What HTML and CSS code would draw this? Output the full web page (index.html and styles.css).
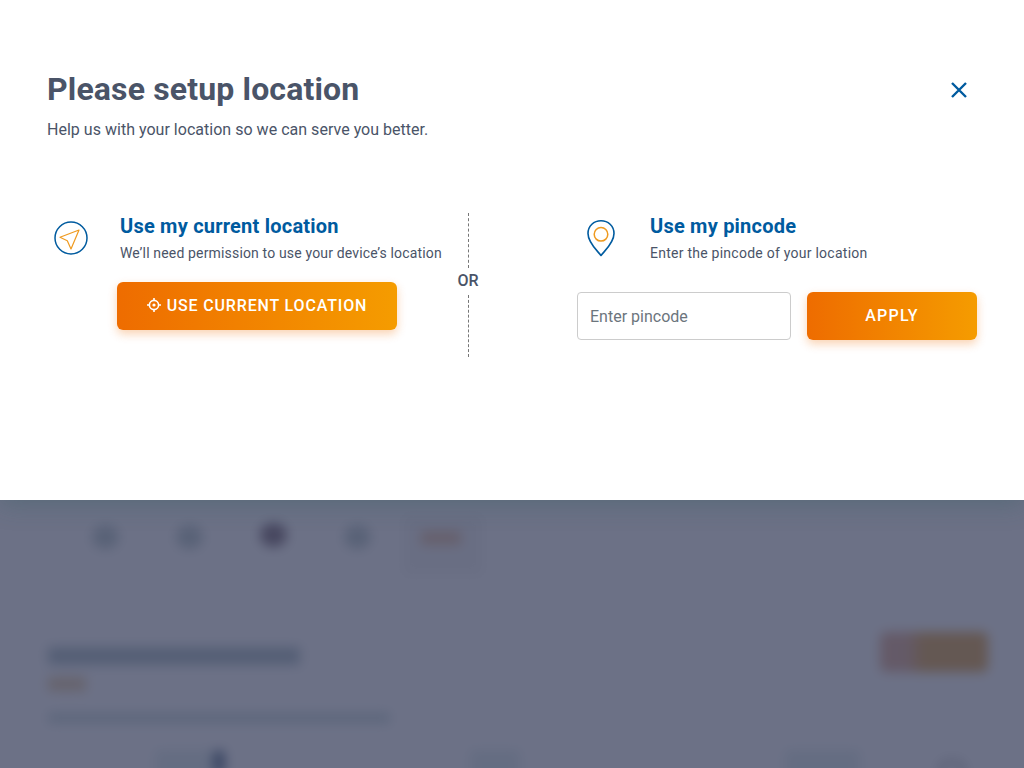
FILE: index.html
```html
<!DOCTYPE html>
<html lang="en">
<head>
    <meta charset="UTF-8">
    <meta name="viewport" content="width=device-width, initial-scale=1.0">
    <title>Please setup location</title>
    <link rel="stylesheet" href="styles.css">
</head>
<body>
    <!-- page behind the modal, blurred -->
    <div class="page">
        <div class="page-nav">
            <span class="nav-dot"></span>
            <span class="nav-dot"></span>
            <span class="nav-dot nav-dark"></span>
            <span class="nav-dot"></span>
            <div class="nav-tab"><span class="nav-label"></span></div>
        </div>
        <div class="page-head">
            <div>
                <div class="page-title"></div>
                <div class="page-tag"></div>
                <div class="page-text"></div>
            </div>
            <div class="page-btn"></div>
        </div>
        <div class="page-art">
            <span class="art-pale art-first"><span class="art-blue"></span></span>
            <span class="art-pale art-second"></span>
            <span class="art-pale art-third"></span>
            <span class="art-outline"></span>
        </div>
    </div>
    <div class="overlay"></div>

    <div class="modal">
        <div class="modal-head">
            <div>
                <h1>Please setup location</h1>
                <p class="subtitle">Help us with your location so we can serve you better.</p>
            </div>
            <button class="close" type="button" aria-label="Close">
                <svg width="18" height="18" viewBox="0 0 18 18" fill="none" stroke="#005b9f" stroke-width="2.4">
                    <path d="M2 2l14 14M16 2L2 16"/>
                </svg>
            </button>
        </div>

        <div class="options">
            <div class="option option-current">
                <div class="option-info">
                    <svg class="option-icon" width="36" height="36" viewBox="0 0 36 36" fill="none">
                        <circle cx="18" cy="18" r="16" stroke="#005b9f" stroke-width="1.5"/>
                        <path d="M7 17.300L26 10 18 29 14.300 20.700z" stroke="#ef9a1f" stroke-width="1.2" stroke-linejoin="round"/>
                    </svg>
                    <div>
                        <h3>Use my current location</h3>
                        <p>We’ll need permission to use your device’s location</p>
                    </div>
                </div>
                <button class="btn btn-location" type="button">
                    <svg width="14" height="14" viewBox="0 0 14 14" fill="none" stroke="#fff" stroke-width="1.6">
                        <circle cx="7" cy="7" r="4.6"/>
                        <circle cx="7" cy="7" r="1.6" fill="#fff" stroke="none"/>
                        <path d="M7 0v2.400M7 11.600V14M0 7h2.400M11.600 7H14"/>
                    </svg>
                    USE CURRENT LOCATION
                </button>
            </div>

            <div class="divider">
                <span class="divider-line line-top"></span>
                <span class="divider-text">OR</span>
                <span class="divider-line line-bottom"></span>
            </div>

            <div class="option option-pincode">
                <div class="option-info">
                    <svg class="option-icon" width="30" height="38" viewBox="0 0 30 38" fill="none">
                        <path d="M15 36.500C11.500 31.800 2 24 2 14.500C2 6.800 8 1.800 15 1.800C22 1.800 28 6.800 28 14.500C28 24 18.500 31.800 15 36.500z" stroke="#005b9f" stroke-width="1.6" stroke-linejoin="round"/>
                        <circle cx="15" cy="15.300" r="6.800" stroke="#ef9a1f" stroke-width="1.5"/>
                    </svg>
                    <div>
                        <h3>Use my pincode</h3>
                        <p>Enter the pincode of your location</p>
                    </div>
                </div>
                <form class="pincode-form">
                    <input class="pincode-input" type="text" placeholder="Enter pincode">
                    <button class="btn btn-apply" type="button">APPLY</button>
                </form>
            </div>
        </div>
    </div>
</body>
</html>
```

FILE: styles.css
```css
* {
    box-sizing: border-box;
}

html, body {
    height: 100%;
}

body {
    margin: 0;
    overflow: hidden;
    font-family: Roboto, Arial, sans-serif;
    background-color: #fff;
    color: #4a5468;
}

/* blurred page */
.page {
    height: 768px;
    padding: 515px 36px 0 48px;
    filter: blur(6px);
}

.page-nav {
    display: flex;
    align-items: flex-start;
    gap: 57px;
    padding-left: 44px;
}

.nav-dot {
    width: 27px;
    height: 24px;
    margin-top: 10px;
    border-radius: 50%;
    background-color: #a0b4b4;
}

.nav-dark {
    margin-top: 8px;
    background-color: #483040;
}

.nav-tab {
    width: 80px;
    height: 60px;
    margin-left: -25px;
    padding: 16px 18px 0;
    background-color: #f0f0f0;
}

.nav-label {
    display: block;
    width: 40px;
    height: 14px;
    background-color: #e0a880;
}

.page-head {
    display: flex;
    justify-content: space-between;
    margin-top: 57px;
}

.page-title {
    width: 252px;
    height: 18px;
    margin-top: 15px;
    background-color: #8ca4ac;
}

.page-tag {
    width: 38px;
    height: 14px;
    margin-top: 12px;
    background-color: #e0b880;
}

.page-text {
    width: 342px;
    height: 10px;
    margin-top: 22px;
    background-color: #b0c8c8;
}

.page-btn {
    width: 108px;
    height: 40px;
    border-radius: 6px;
    background: linear-gradient(90deg, #d88c68 25%, #d88000 40%, #d88000);
}

.page-art {
    display: flex;
    height: 40px;
    margin-top: 27px;
}

.art-pale {
    display: flex;
    justify-content: flex-end;
    background-color: #d8e8e8;
}

.art-first {
    width: 70px;
    margin-left: 107px;
}

.art-second {
    width: 50px;
    margin-left: 245px;
}

.art-third {
    width: 75px;
    margin-left: 265px;
}

.art-blue {
    width: 12px;
    height: 24px;
    border-radius: 6px;
    background-color: #0c2c54;
}

.art-outline {
    width: 24px;
    height: 26px;
    margin: 11px 0 0 80px;
    border: 2px solid #333;
    border-radius: 8px;
}

.overlay {
    position: absolute;
    top: 0;
    left: 0;
    width: 100%;
    height: 100%;
    background-color: rgba(71, 77, 104, 0.8);
}

/* modal */
.modal {
    position: absolute;
    top: 0;
    left: 0;
    width: 100%;
    height: 500px;
    padding: 70px 47px 0;
    background-color: #fff;
    box-shadow: 0 4px 24px rgba(40, 90, 90, 0.3);
}

.modal-head {
    display: flex;
    justify-content: space-between;
    align-items: flex-start;
}

h1 {
    margin: 0;
    font-size: 32px;
    line-height: 38px;
    font-weight: 700;
    letter-spacing: 0.15px;
}

.subtitle {
    margin: 12px 0 0;
    font-size: 16px;
    line-height: 20px;
    letter-spacing: 0.02px;
}

.close {
    display: flex;
    margin: 11px 9px 0 0;
    padding: 0;
    border: none;
    background: none;
    cursor: pointer;
}

.options {
    display: flex;
    margin-top: 73px;
}

.option-current {
    width: 410px;
}

.option-info {
    display: flex;
}

.option-current .option-info {
    padding-left: 6px;
}

.option-current .option-icon {
    margin: 7px 31px 0 0;
}

.option-pincode .option-info {
    padding-left: 9px;
}

.option-pincode .option-icon {
    margin: 6px 34px 0 0;
}

h3 {
    margin: 0;
    font-size: 20px;
    line-height: 26px;
    font-weight: 700;
    letter-spacing: 0.22px;
    color: #005b9f;
}

.option-info p {
    margin: 4px 0 0;
    font-size: 14px;
    line-height: 20px;
    letter-spacing: 0.16px;
}

.option-pincode .option-info p {
    letter-spacing: 0.25px;
}

.btn {
    display: flex;
    align-items: center;
    justify-content: center;
    height: 48px;
    padding: 0 0 2px;
    border: none;
    border-radius: 6px;
    color: #fff;
    font-family: inherit;
    font-size: 16px;
    font-weight: 500;
    letter-spacing: 1.2px;
    background: linear-gradient(90deg, #ee6c00, #f59c00);
    box-shadow: 0 4px 10px rgba(238, 108, 0, 0.3);
    cursor: pointer;
}

.btn-location {
    gap: 6px;
    width: 280px;
    margin: 19px 0 0 70px;
    letter-spacing: 0.85px;
}

.divider {
    display: flex;
    flex-direction: column;
    align-items: center;
    width: 22px;
}

.divider-line {
    width: 0;
    border-left: 1px dashed #777;
}

.line-top {
    height: 55px;
}

.line-bottom {
    height: 62px;
}

.divider-text {
    margin: 3px 0 5px;
    font-size: 16px;
    line-height: 19px;
    font-weight: 500;
}

.option-pincode {
    margin-left: 98px;
    width: 400px;
}

.pincode-form {
    display: flex;
    gap: 16px;
    margin-top: 29px;
}

.pincode-input {
    width: 214px;
    height: 48px;
    padding: 0 12px;
    border: 1px solid #ccc;
    border-radius: 4px;
    font-family: inherit;
    font-size: 16px;
    color: #4a5468;
}

.pincode-input::placeholder {
    color: #6c757d;
    opacity: 1;
}

.btn-apply {
    width: 170px;
}
```
